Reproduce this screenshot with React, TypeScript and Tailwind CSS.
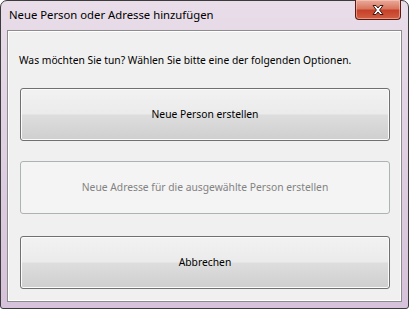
export default function App() {
  const font = { fontFamily: '"Segoe UI", "Noto Sans", "Open Sans", sans-serif' };
  return (
    <div
      className="w-[409px] h-[309px] flex flex-col border border-[#3b3b3b] rounded-t-[7px] rounded-b-[3px] bg-gradient-to-b from-[#e8dde9] to-[#d6c2da] text-[10.3px] text-black"
      style={font}
    >
      <div className="h-[29px] flex justify-between items-start">
        <div className="pl-[8px] pt-[6px] leading-[16px] text-[11.3px] whitespace-nowrap">Neue Person oder Adresse hinzufügen</div>
        <button className="mr-[7px] -mt-px w-[46px] h-[20px] flex items-center justify-center border border-[#5a1a12] border-t-0 rounded-b-[4px] bg-[linear-gradient(#e9ab9c_0%,#d9775f_45%,#c6402a_55%,#d25f42_100%)] shadow-[inset_0_0_0_1px_rgba(255,210,200,0.5)]">
          <svg width="14" height="12" viewBox="0 0 14 12">
            <path
              d="M2 1.5 L5 1.5 L7 4 L9 1.5 L12 1.5 L8.6 6 L12 10.5 L9 10.5 L7 8 L5 10.5 L2 10.5 L5.4 6 Z"
              fill="#ffffff"
              stroke="#3a1a16"
              strokeWidth="1"
              strokeLinejoin="round"
            />
          </svg>
        </button>
      </div>
      <div className="mx-[6px] h-[272px] border border-[#8c8c8c] bg-[#f0f0f0] shadow-[inset_0_0_0_1px_#ffffff] flex flex-col">
        <p className="ml-[11px] mt-[21px] leading-[16px] whitespace-nowrap">
          Was möchten Sie tun? Wählen Sie bitte eine der folgenden Optionen.
        </p>
        <button className="ml-[12px] mt-[20px] w-[370px] h-[53px] rounded-[3px] border border-[#707070] bg-[linear-gradient(#f2f2f2_0%,#ebebeb_48%,#dddddd_52%,#cfcfcf_100%)] shadow-[inset_0_0_0_1px_#fbfbfb]">
          Neue Person erstellen
        </button>
        <button
          disabled
          className="ml-[12px] mt-[20px] w-[370px] h-[53px] rounded-[3px] border border-[#adb2b5] bg-[#f4f4f4] text-[#838383]"
        >
          Neue Adresse für die ausgewählte Person erstellen
        </button>
        <button className="ml-[12px] mt-[22px] w-[370px] h-[53px] rounded-[3px] border border-[#707070] bg-[linear-gradient(#f2f2f2_0%,#ebebeb_48%,#dddddd_52%,#cfcfcf_100%)] shadow-[inset_0_0_0_1px_#fbfbfb]">
          Abbrechen
        </button>
      </div>
    </div>
  );
}
